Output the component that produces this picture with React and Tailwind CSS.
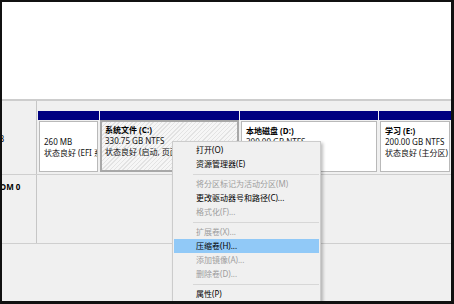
import React from 'react';

const font = "font-['Noto_Sans','Noto_Sans_CJK_SC',sans-serif]";

const partitions = [
    { width: 'w-[61px]', lines: ['\u00a0', '260 MB', '状态良好 (EFI 系统分区)'] },
    { width: 'w-[139px]', title: '系统文件  (C:)', lines: ['330.75 GB NTFS', '状态良好 (启动, 页面文件, 故障转储, 主分区)'], selected: true },
    { width: 'w-[138px]', title: '本地磁盘  (D:)', lines: ['300.00 GB NTFS', '状态良好 (主分区)'] },
    { width: 'flex-1', title: '学习  (E:)', lines: ['200.00 GB NTFS', '状态良好 (主分区)'] },
];

const menu = [
    { label: '打开(O)' },
    { label: '资源管理器(E)' },
    { sep: true },
    { label: '将分区标记为活动分区(M)', disabled: true },
    { label: '更改驱动器号和路径(C)...' },
    { label: '格式化(F)...', disabled: true },
    { sep: true },
    { label: '扩展卷(X)...', disabled: true },
    { label: '压缩卷(H)...', active: true },
    { label: '添加镜像(A)...', disabled: true },
    { label: '删除卷(D)...', disabled: true },
    { sep: true },
    { label: '属性(P)' },
];

function Partition({ p }) {
    return (
        <div className={`${p.width} flex flex-col min-w-0`}>
            <div className="h-[9px] bg-[#000080]" />
            <div
                className={
                    p.selected
                        ? 'flex-1 border-2 border-[#a8a8a8] bg-[repeating-linear-gradient(135deg,#e3e3e3_0px,#e3e3e3_1px,#f6f6f6_1px,#f6f6f6_3px)] pl-[3px] pt-[2px] overflow-hidden'
                        : 'flex-1 border border-[#b9b9b9] bg-white pl-[4px] pt-[3px] overflow-hidden mx-[1px] mt-[1px]'
                }
            >
                {p.title && <div className="text-[8px] leading-[11px] font-bold whitespace-nowrap">{p.title}</div>}
                {p.lines.map((l, i) => (
                    <div key={i} className="text-[8px] leading-[11px] whitespace-nowrap text-[#111]">{l}</div>
                ))}
            </div>
        </div>
    );
}

export default function App() {
    return (
        <div className={`w-[454px] h-[304px] bg-[#111] pt-[2px] pl-[2px] pr-[3px] pb-[3px] ${font}`}>
            <div className="relative h-full flex flex-col bg-[#f0f0f0] overflow-hidden">
                {/* volume list */}
                <div className="h-[97px] bg-white" />
                <div className="h-[2px] bg-[#cdcdcd]" />

                {/* Disk 0 */}
                <div className="flex h-[74px] border-b border-[#cfcfcf]">
                    <div className="w-[35px] border-r border-[#c6c6c6] overflow-hidden pt-[32px]">
                        <div className="-ml-[36px] text-[8px] leading-[11px] whitespace-nowrap">931.51 GB</div>
                    </div>
                    <div className="flex-1 flex gap-[1px] pl-[1px] pt-[10px] pb-[2px]">
                        {partitions.map((p, i) => (
                            <Partition key={i} p={p} />
                        ))}
                    </div>
                </div>

                {/* CD-ROM 0 */}
                <div className="flex h-[69px] border-b border-[#cfcfcf]">
                    <div className="w-[35px] border-r border-[#c6c6c6] overflow-hidden pt-[6px]">
                        <div className="-ml-[21px] text-[8px] leading-[11px] font-bold whitespace-nowrap">CD-ROM 0</div>
                    </div>
                    <div className="flex-1" />
                </div>

                {/* context menu */}
                <div className="absolute left-[170px] top-[139px] w-[149px] border border-[#cccccc] bg-[#f0f0f0] p-[1px] shadow-[2px_2px_3px_rgba(0,0,0,0.25)]">
                    {menu.map((m, i) =>
                        m.sep ? (
                            <div key={i} className="h-[6px] flex items-center pl-[19px]">
                                <div className="h-px w-full bg-[#d7d7d7]" />
                            </div>
                        ) : (
                            <div
                                key={i}
                                className={`h-[14px] flex items-center pl-[22px] text-[8px] leading-none whitespace-nowrap ${
                                    m.active ? 'bg-[#91c9f7] text-black' : m.disabled ? 'text-[#9d9d9d]' : 'text-black'
                                }`}
                            >
                                {m.label}
                            </div>
                        )
                    )}
                </div>
            </div>
        </div>
    );
}
